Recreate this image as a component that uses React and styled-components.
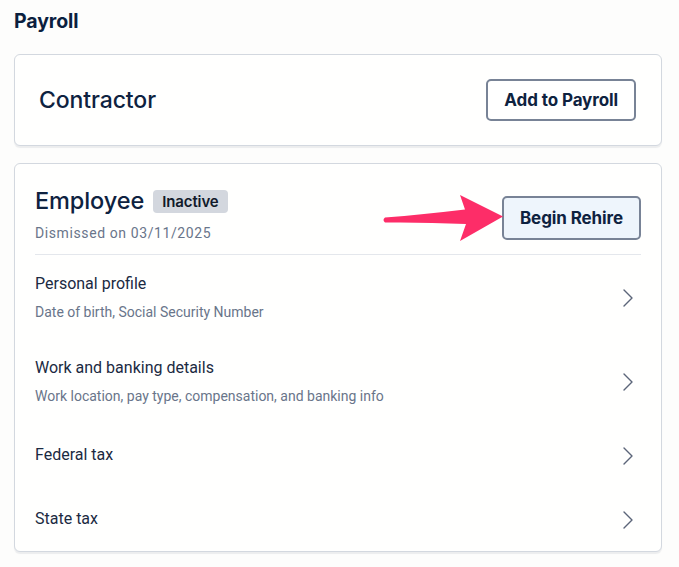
import React from "react";
import styled, { createGlobalStyle } from "styled-components";

const GlobalStyle = createGlobalStyle`
  html, body {
    margin: 0;
    padding: 0;
    background: #fdfdfc;
  }
  body {
    font-family: Inter, "Liberation Sans", sans-serif;
    color: #0e2240;
  }
`;

const Page = styled.div`
  padding: 8px 17px 16px 14px;
  display: flex;
  flex-direction: column;
`;

const PageTitle = styled.h1`
  margin: 0 0 20px;
  font-size: 19.5px;
  font-weight: 700;
  line-height: 26px;
  letter-spacing: -0.1px;
  color: #0b1f3f;
`;

const Card = styled.section`
  background: #fffffe;
  border: 1px solid #d3d8df;
  border-radius: 6px;
  box-shadow: 0 2px 1px rgba(20, 30, 50, 0.07);
  margin-bottom: ${(p) => p.$gap || 0}px;
`;

const ContractorRow = styled.div`
  display: flex;
  align-items: center;
  justify-content: space-between;
  padding: 24px 25px 24px 24px;
`;

const CardTitle = styled.h2`
  margin: 0;
  font-weight: 500;
  font-size: ${(p) => p.$size}px;
  line-height: 30px;
  color: #0e2240;
  letter-spacing: -0.1px;
`;

const Button = styled.button`
  font-family: Inter, "Liberation Sans", sans-serif;
  font-size: 17px;
  font-weight: 700;
  letter-spacing: -0.1px;
  color: #0e2240;
  background: ${(p) => (p.$tinted ? "#eef5fc" : "#ffffff")};
  border: 2px solid #788396;
  border-radius: 5px;
  height: ${(p) => p.$h}px;
  padding: 0 ${(p) => p.$px}px;
  cursor: pointer;
`;

const EmployeeBody = styled.div`
  padding: 0 20px;
`;

const Header = styled.div`
  display: flex;
  align-items: center;
  justify-content: space-between;
  padding: 22px 0 12px;
  border-bottom: 1px solid #e4e7ec;
`;

const HeaderText = styled.div`
  display: flex;
  flex-direction: column;
  gap: 8px;
`;

const TitleLine = styled.div`
  display: flex;
  align-items: center;
  gap: 9px;
`;

const Badge = styled.span`
  background: #d3d7de;
  color: #111a2a;
  font-size: 15px;
  font-weight: 600;
  line-height: 23px;
  padding: 0 9px;
  border-radius: 4px;
  letter-spacing: -0.1px;
`;

const Muted = styled.div`
  font-family: Roboto, "Liberation Sans", sans-serif;
  font-size: 14px;
  line-height: 18px;
  letter-spacing: ${(p) => p.$spread || 0}px;
  color: #69758a;
`;

const RehireWrap = styled.div`
  position: relative;
  margin-top: 8px;
`;

const Arrow = styled.svg`
  position: absolute;
  right: 100%;
  top: -3px;
  margin-right: -3px;
`;

const RowList = styled.div`
  display: flex;
  flex-direction: column;
`;

const Row = styled.div`
  display: flex;
  align-items: center;
  justify-content: space-between;
  min-height: ${(p) => (p.$tall ? 84 : 64)}px;
  cursor: pointer;
`;

const RowText = styled.div`
  display: flex;
  flex-direction: column;
  gap: 9px;
`;

const RowTitle = styled.div`
  font-family: Roboto, "Liberation Sans", sans-serif;
  font-size: 16px;
  line-height: 20px;
  color: #1b2a42;
`;

const Chevron = styled.svg`
  flex: none;
  margin-right: 7px;
  margin-top: 2px;
`;

const rows = [
  { title: "Personal profile", sub: "Date of birth, Social Security Number" },
  {
    title: "Work and banking details",
    sub: "Work location, pay type, compensation, and banking info",
  },
  { title: "Federal tax" },
  { title: "State tax" },
];

const ChevronIcon = () => (
  <Chevron width="12" height="20" viewBox="0 0 12 20" fill="none">
    <path d="M2 2 L10 10 L2 18" stroke="#5b6579" strokeWidth="1.4" strokeLinecap="round" strokeLinejoin="round" />
  </Chevron>
);

export default function App() {
  return (
    <>
      <GlobalStyle />
      <Page>
        <PageTitle>Payroll</PageTitle>

        <Card $gap={17}>
          <ContractorRow>
            <CardTitle $size={23}>Contractor</CardTitle>
            <Button $h={42} $px={16}>Add to Payroll</Button>
          </ContractorRow>
        </Card>

        <Card>
          <EmployeeBody>
            <Header>
              <HeaderText>
                <TitleLine>
                  <CardTitle $size={23.5}>Employee</CardTitle>
                  <Badge>Inactive</Badge>
                </TitleLine>
                <Muted $spread={0.6}>Dismissed on 03/11/2025</Muted>
              </HeaderText>
              <RehireWrap>
                <Arrow width="124" height="50" viewBox="0 0 124 50">
                  <path
                    d="M4 24.5 Q42 21.5 84 16.5 L79 2 L122 23.5 L79 48 L85 31 Q42 29 4 29.5 Q1 27 4 24.5 Z"
                    fill="#fd2d68"
                  />
                </Arrow>
                <Button $tinted $h={44} $px={16}>Begin Rehire</Button>
              </RehireWrap>
            </Header>

            <RowList>
              {rows.map((r) => (
                <Row key={r.title} $tall={!!r.sub}>
                  <RowText>
                    <RowTitle>{r.title}</RowTitle>
                    {r.sub && <Muted>{r.sub}</Muted>}
                  </RowText>
                  <ChevronIcon />
                </Row>
              ))}
            </RowList>
          </EmployeeBody>
        </Card>
      </Page>
    </>
  );
}
